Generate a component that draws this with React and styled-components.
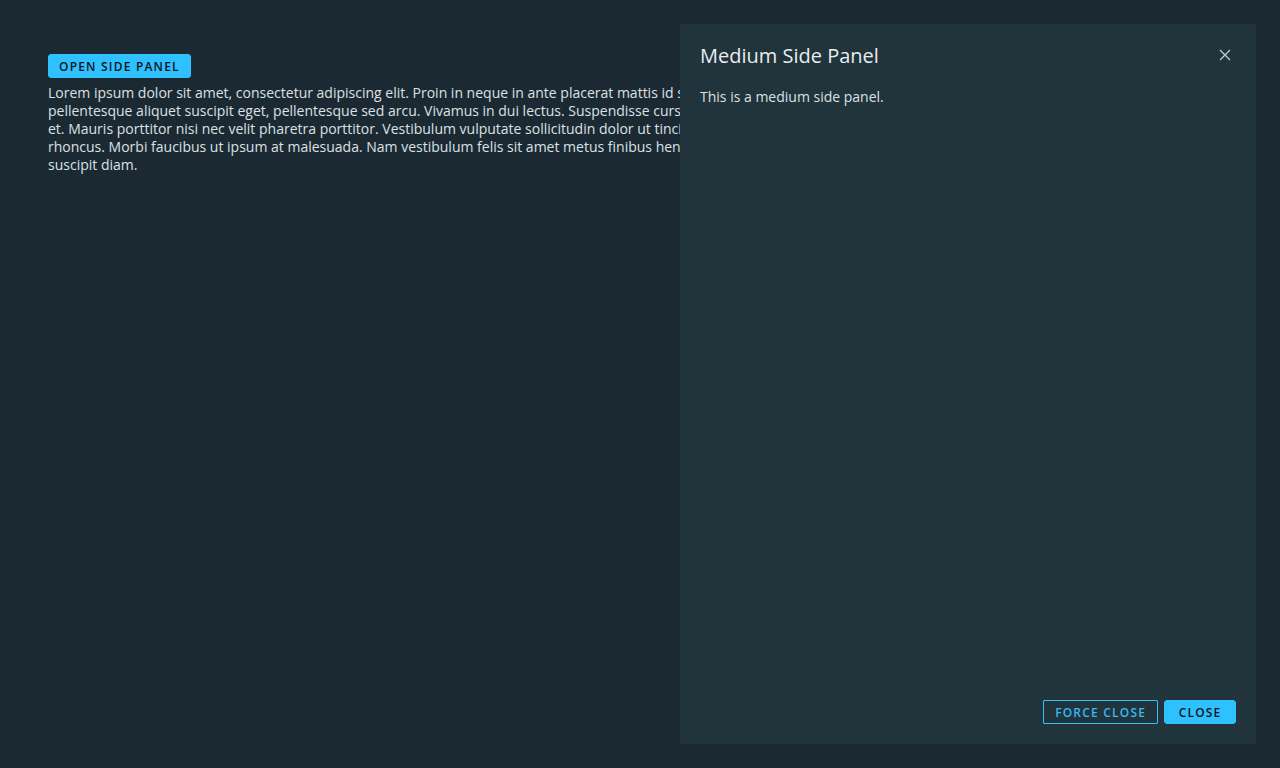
import React from "react";
import styled, { createGlobalStyle } from "styled-components";

const Global = createGlobalStyle`
  html, body { margin: 0; padding: 0; background: #1b2a32; }
  body { font-family: "Open Sans", Lato, sans-serif; color: #dbe1e4; }
  * { box-sizing: border-box; }
`;

const Page = styled.main`
  height: 768px;
  padding: 54px 48px 0;
  overflow: hidden;
`;

const Actions = styled.div`
  display: flex;
`;

const Button = styled.button`
  display: inline-flex;
  align-items: center;
  justify-content: center;
  height: 24px;
  padding: 0 ${(p) => p.$pad ?? 10}px;
  font-family: "Open Sans", sans-serif;
  font-size: 12px;
  font-weight: 600;
  letter-spacing: 0.1em;
  text-transform: uppercase;
  cursor: pointer;
  border: 1px solid #2ec0ff;
  background: ${(p) => (p.$outline ? "transparent" : "#2ec0ff")};
  color: ${(p) => (p.$outline ? "#36b9f3" : "#0e161a")};
  border-radius: ${(p) => (p.$outline ? "1px" : "3px")};
`;

const Text = styled.p`
  margin: 6px 0 0;
  font-size: 14px;
  line-height: 18px;
  white-space: nowrap;
`;

const Panel = styled.aside`
  position: fixed;
  top: 24px;
  right: 24px;
  bottom: 24px;
  width: 576px;
  background: #21333b;
  display: flex;
  flex-direction: column;
  padding: 20px;
`;

const Header = styled.header`
  display: flex;
  align-items: center;
  justify-content: space-between;
  height: 22px;
`;

const Title = styled.h3`
  margin: 0;
  font-size: 20px;
  font-weight: 400;
  color: #e9edef;
`;

const CloseX = styled.button`
  background: none;
  border: 0;
  padding: 0;
  width: 16px;
  height: 16px;
  margin-right: 3px;
  display: flex;
  align-items: center;
  justify-content: center;
  color: #c3ccd1;
  cursor: pointer;
`;

const Body = styled.div`
  flex: 1;
  padding-top: 22px;
  font-size: 14px;
  line-height: 18px;
`;

const Footer = styled.footer`
  display: flex;
  justify-content: flex-end;
  gap: 6px;
`;

export default function App() {
  return (
    <>
      <Global />
      <Page>
        <Actions>
          <Button>Open side panel</Button>
        </Actions>
        <Text>
          Lorem ipsum dolor sit amet, consectetur adipiscing elit. Proin in neque in ante placerat mattis id sed quam. Proin rhoncus lacus et tempor dignissim. Vivamus sem quam,
          <br />
          pellentesque aliquet suscipit eget, pellentesque sed arcu. Vivamus in dui lectus. Suspendisse cursus est ac nisl imperdiet viverra. Aenean sagittis nibh lacus, in eleifend urna ultrices
          <br />
          et. Mauris porttitor nisi nec velit pharetra porttitor. Vestibulum vulputate sollicitudin dolor ut tincidunt. Phasellus vitae blandit felis. Nullam posuere ipsum tincidunt velit
          <br />
          rhoncus. Morbi faucibus ut ipsum at malesuada. Nam vestibulum felis sit amet metus finibus hendrerit. Fusce faucibus odio eget ex vulputate rhoncus. Fusce nec aliquam leo, ut
          <br />
          suscipit diam.
        </Text>
      </Page>
      <Panel role="dialog" aria-label="Medium Side Panel">
        <Header>
          <Title>Medium Side Panel</Title>
          <CloseX aria-label="Close">
            <svg width="12" height="12" viewBox="0 0 12 12">
              <path d="M1 1L11 11M11 1L1 11" stroke="currentColor" strokeWidth="1.3" fill="none" />
            </svg>
          </CloseX>
        </Header>
        <Body>This is a medium side panel.</Body>
        <Footer>
          <Button $outline $pad={11}>Force close</Button>
          <Button $pad={13.5}>Close</Button>
        </Footer>
      </Panel>
    </>
  );
}
